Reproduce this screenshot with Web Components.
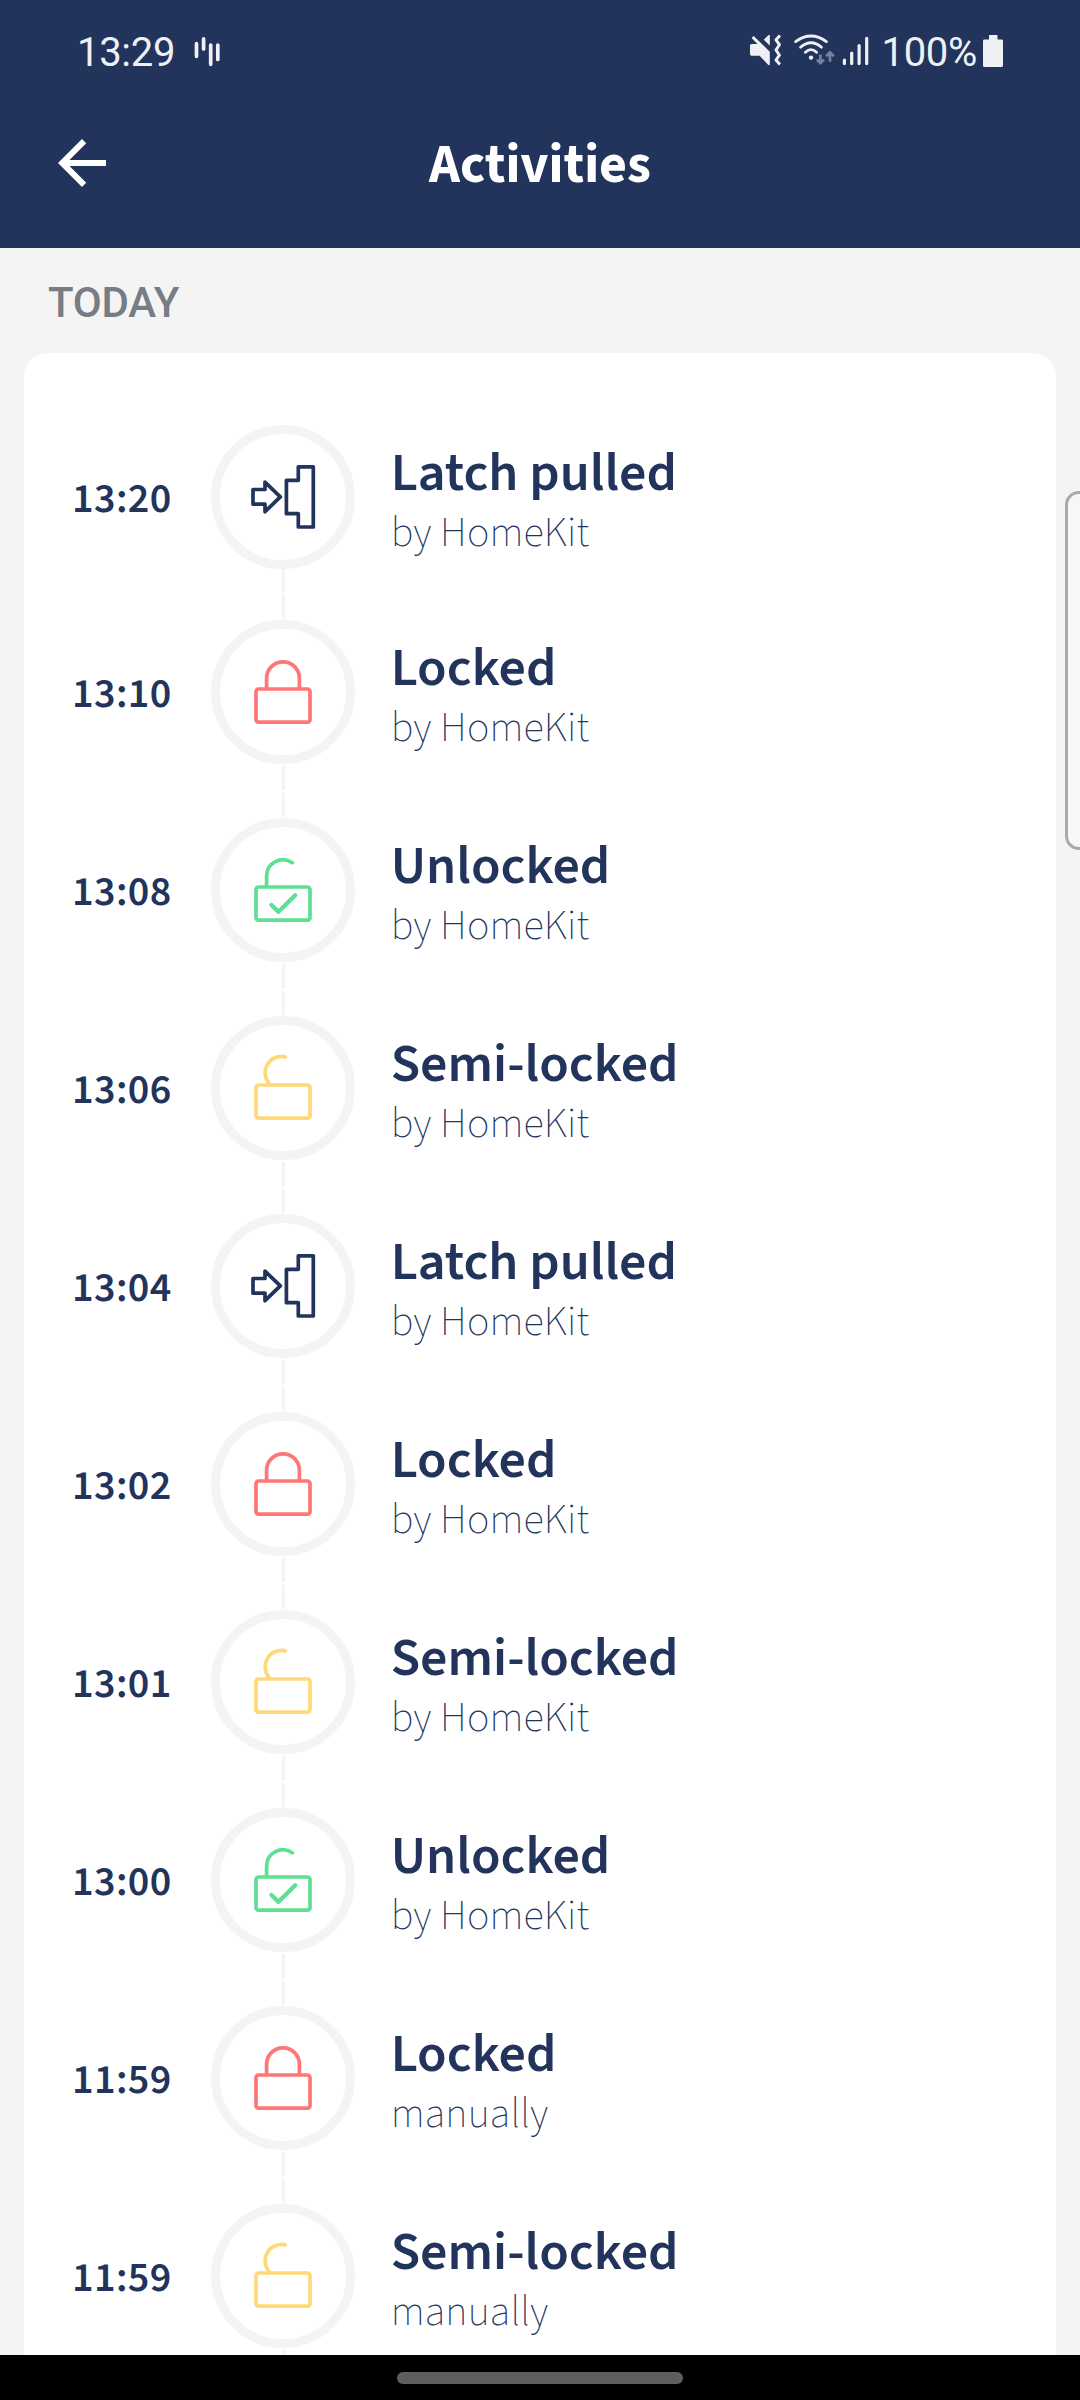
<!DOCTYPE html>
<html lang="en">
<head>
<meta charset="utf-8">
<title>Activities</title>
<style>
html,body{margin:0;background:#f4f4f4}
body{width:1080px;height:2400px;overflow:hidden;position:relative;font-family:"Source Sans 3","Noto Sans CJK SC",sans-serif}
</style>
</head>
<body>
<activity-app></activity-app>
<script>
const define = (name, html, init) => customElements.define(name, class extends HTMLElement {
  connectedCallback() {
    if (this.shadowRoot) return;
    this.attachShadow({mode: 'open'}).innerHTML = html;
    if (init) init.call(this, this.shadowRoot);
  }
});

define('status-bar', `
<style>
:host{display:flex;align-items:center;height:104px;box-sizing:border-box;padding:0 77px 0 77px;color:#eff0f3;font:400 40px/60px Roboto,sans-serif}
svg{display:block;flex:none}
.clock{width:99px;letter-spacing:-.3px;padding-top:2px}
.wave{margin-left:18px}
.right{margin-left:auto;display:flex;align-items:center}
.pct{letter-spacing:-.3px;margin-left:1px;padding-top:2px}
.bat{margin-left:6px}
</style>
<span class="clock">13:29</span>
<svg class="wave" width="28" height="34" viewBox="194 35 28 34" stroke="currentColor" stroke-width="3.7" stroke-linecap="round"><path d="M196.5 43.7V56.3M203.6 38.8V49M210.7 45V64.3M217.8 45V59.5"/></svg>
<div class="right">
<svg width="140" height="60" viewBox="740 22 140 60" fill="none" stroke="currentColor">
<g transform="translate(740 25)">
<path fill="currentColor" stroke="none" d="M11.6 19H17.5L11.6 13.1 13.7 11 29.8 26.7V40H28.3L19.6 30.7H11.6Q10 30.7 10 29V20.6Q10 19 11.6 19ZM23.7 14.8L28.6 10H29.8V20.6Z"/>
<path stroke-width="3" stroke-linejoin="round" d="M40 10.5L36 14.8 39.4 19.7 36 25 39.4 30.2 36 35 40 39.4"/>
<g stroke-width="2.8" stroke-linecap="round"><path d="M55.6 16.6Q71 5.4 86.4 16.6M60.5 22.2Q71 13.4 81.5 22.2M65.4 27.3Q71 22 76.6 27.3"/></g>
<circle cx="71" cy="32.6" r="2.2" fill="currentColor" stroke="none"/>
<g stroke="#75829d" stroke-width="2.7"><path d="M80.4 29.6V37.8M76.8 34.6L80.4 38.2 84 34.6M90 36.8V28.4M86.2 31.2L90 27.4 93.8 31.2"/></g>
<g stroke-width="3.2" stroke-linecap="round"><path d="M104.4 35V38.6M111.7 28V38.6M119.1 20.6V38.6M126.7 13.4V38.6"/></g>
</g>
</svg>
<span class="pct">100%</span>
<svg class="bat" width="20" height="35" viewBox="0 1 20 35" fill="currentColor"><path d="M6 0H14.5V4.6H18.5Q20 4.6 20 6V30.5Q20 32 18.5 32H1.5Q0 32 0 30.5V6Q0 4.6 1.5 4.6H6Z" transform="translate(0 1)"/></svg>
</div>`);

define('app-header', `
<style>
:host{display:grid;grid-template-columns:164px 1fr 164px;align-items:center;height:144px;box-sizing:border-box;color:#fff}
svg{display:block;margin:-26px 0 0 46px}
h1{margin:-20px 0 0;text-align:center;font-size:54px;line-height:60px;font-weight:700}
</style>
<svg width="72" height="72" viewBox="0 0 24 24" fill="currentColor"><path d="M20 11H7.83l5.59-5.59L12 4l-8 8 8 8 1.41-1.41L7.83 13H20v-2z"/></svg>
<h1><slot></slot></h1><span></span>`);

define('section-label', `
<style>
:host{display:block;padding:24px 48px 19px;font:500 42px/62px Roboto,sans-serif;letter-spacing:-.2px;color:#777c85}
</style><slot></slot>`);

const ICONS = {
  latch: '<g stroke="#22345b"><path d="M87.3 41.8H102.3V102H87.3V88.7H75.4V55.3H87.3ZM42 64.5H54V57.1L69.3 71.9 54 86.7V79.2H42Z"/></g>',
  locked: '<g stroke="#ff7676"><rect x="45" y="69" width="54" height="33.2" rx="2.5"/><path d="M55.6 68V58.2A16.4 16.4 0 0 1 88.4 58.2V68"/></g>',
  unlocked: '<g stroke="#5ee094"><rect x="45" y="69" width="54" height="33.2" rx="2.5"/><path stroke-linecap="round" d="M55.6 68V58.2A16.4 16.4 0 0 1 81.4 44.8"/><path stroke-linecap="round" stroke-width="4.4" d="M60.5 87L67.5 93.8 84.2 77.3"/></g>',
  semi: '<g stroke="#ffd977"><rect x="45" y="69" width="54" height="33.2" rx="2.5"/><path stroke-linecap="round" d="M58.5 68A16.4 16.4 0 0 1 74.3 40.9"/></g>'
};
define('activity-icon', `
<style>
:host{display:block;width:144px;height:144px;box-sizing:border-box;border:9px solid #f4f4f4;border-radius:50%}
svg{display:block}
</style>
<svg width="126" height="126" viewBox="9 9 126 126" fill="none" stroke-width="3.7" stroke-linejoin="round"></svg>`,
function (r) { r.querySelector('svg').innerHTML = ICONS[this.getAttribute('kind')]; });

define('activity-row', `
<style>
:host{display:grid;grid-template-columns:176px 144px 1fr;height:195px;margin-bottom:3px;padding-left:11px;color:#22345b}
.time{margin-top:69px;font-size:42px;line-height:60px;font-weight:600;letter-spacing:.4px;padding-left:37px}
.rail{display:flex;flex-direction:column;align-items:center}
.line{width:3px;height:24px;background:#f4f4f4;margin-left:1px;flex:none}
.top{margin-bottom:1px}.bottom{margin-top:2px}
:host([first]) .top{visibility:hidden}
:host([first]) .bottom{margin-top:0}
:host([first]){margin-bottom:0}
.text{padding:44px 0 0 35.7px}
.title{font-size:54px;line-height:60px;font-weight:600}
.sub{font-size:42px;line-height:58px;font-weight:200;letter-spacing:.2px}
</style>
<div class="time"></div>
<div class="rail"><i class="line top"></i><activity-icon></activity-icon><i class="line bottom"></i></div>
<div class="text"><div class="title"><slot></slot></div><div class="sub"><slot name="by"></slot></div></div>`,
function (r) {
  r.querySelector('.time').textContent = this.getAttribute('time');
  const icon = document.createElement('activity-icon');
  icon.setAttribute('kind', this.getAttribute('kind'));
  r.querySelector('activity-icon').replaceWith(icon);
});

define('activity-card', `
<style>
:host{display:block;flex:1;min-height:0;overflow:hidden;margin:0 24px;padding-top:47px;background:#fff;border-radius:24px 24px 0 0;box-sizing:border-box}
</style><slot></slot>`);

define('nav-bar', `
<style>
:host{display:flex;justify-content:center;align-items:center;height:45px;background:#000;flex:none}
i{width:286px;height:12px;border-radius:6px;background:#5e5e5e}
</style><i></i>`);

define('edge-handle', `
<style>
:host{position:absolute;right:-20px;top:491px;width:35px;height:359px;box-sizing:border-box;border:3px solid #a9a9a9;border-radius:14px;background:#f7f7f7}
</style>`);

const LABEL = {latch: 'Latch pulled', locked: 'Locked', unlocked: 'Unlocked', semi: 'Semi-locked'};
const ROWS = [
  ['13:20', 'latch'], ['13:10', 'locked'], ['13:08', 'unlocked'], ['13:06', 'semi'], ['13:04', 'latch'],
  ['13:02', 'locked'], ['13:01', 'semi'], ['13:00', 'unlocked'], ['11:59', 'locked', 'manually'], ['11:59', 'semi', 'manually']
];
define('activity-app', `
<style>
:host{display:flex;flex-direction:column;width:1080px;height:2400px;overflow:hidden;position:relative}
header{background:#22345b;height:248px;flex:none}
</style>
<header><status-bar></status-bar><app-header>Activities</app-header></header>
<section-label>TODAY</section-label>
<activity-card>${ROWS.map(([t, k, by = 'by HomeKit'], i) => `<activity-row time="${t}" kind="${k}"${i ? '' : ' first'}>${LABEL[k]}<span slot="by">${by}</span></activity-row>`).join('')}</activity-card>
<nav-bar></nav-bar>
<edge-handle></edge-handle>`);
</script>
</body>
</html>
